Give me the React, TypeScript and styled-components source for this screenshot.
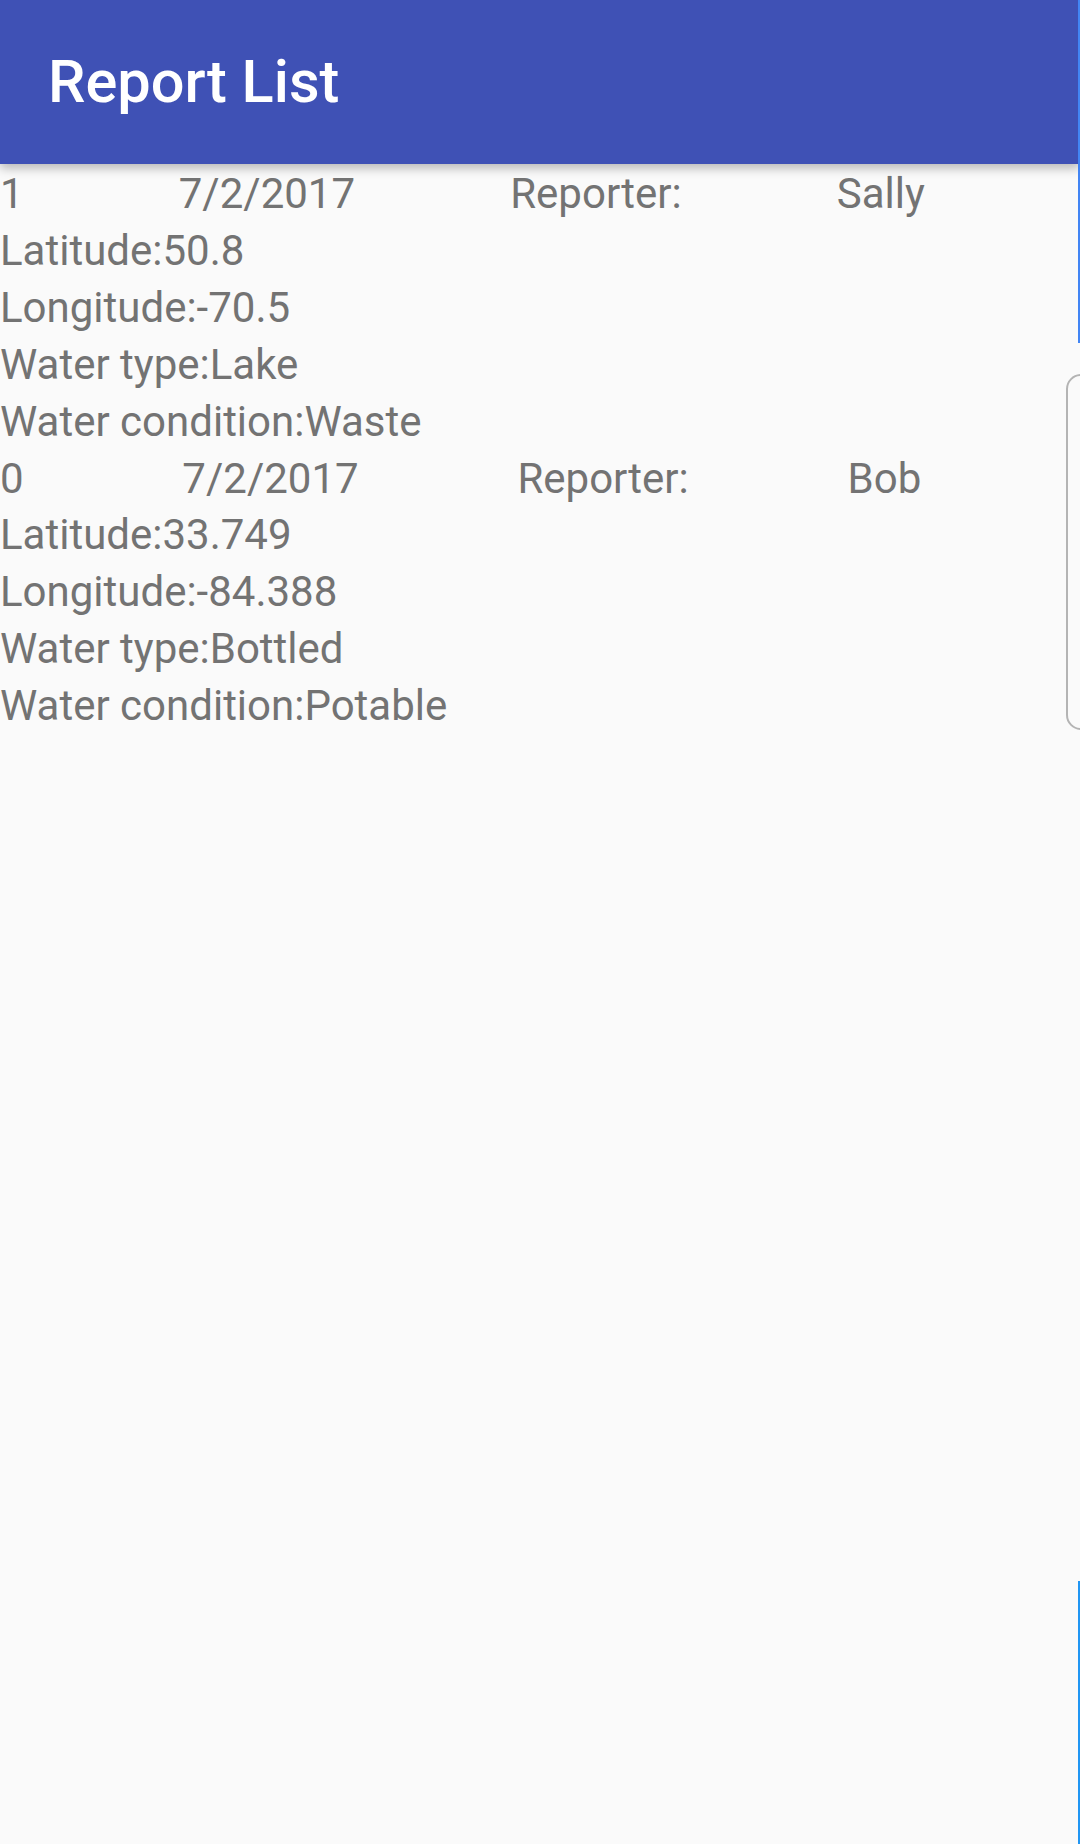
import React from "react";
import styled, { createGlobalStyle } from "styled-components";

interface Report {
  id: number;
  date: string;
  reporter: string;
  latitude: string;
  longitude: string;
  waterType: string;
  waterCondition: string;
}

const reports: Report[] = [
  {
    id: 1,
    date: "7/2/2017",
    reporter: "Sally",
    latitude: "50.8",
    longitude: "-70.5",
    waterType: "Lake",
    waterCondition: "Waste",
  },
  {
    id: 0,
    date: "7/2/2017",
    reporter: "Bob",
    latitude: "33.749",
    longitude: "-84.388",
    waterType: "Bottled",
    waterCondition: "Potable",
  },
];

const GlobalStyle = createGlobalStyle`
  html, body {
    margin: 0;
    padding: 0;
    background: #fafafa;
  }
  body {
    font-family: Roboto, "Noto Sans", sans-serif;
  }
`;

const Screen = styled.div`
  position: relative;
  width: 1080px;
  height: 1844px;
  overflow: hidden;
  background: #fafafa;
`;

const Toolbar = styled.header`
  position: relative;
  z-index: 1;
  display: flex;
  align-items: center;
  height: 164px;
  padding-left: 48px;
  box-sizing: border-box;
  background: #3f51b5;
  box-shadow: 0 4px 10px rgba(0, 0, 0, 0.28);
`;

const Title = styled.h1`
  margin: 0;
  color: #ffffff;
  font-size: 59.5px;
  font-weight: 500;
`;

const List = styled.div`
  display: flex;
  flex-direction: column;
  padding-top: 2px;
`;

const Line = styled.div`
  display: flex;
  color: #737373;
  font-size: 42px;
  line-height: 56.9px;
  white-space: nowrap;
`;

const Cell = styled.span`
  flex: 1 1 auto;
`;

const EdgeStrip = styled.div<{ $top: number; $height: number; $color: string }>`
  position: absolute;
  right: 0;
  top: ${({ $top }) => $top}px;
  width: 2px;
  height: ${({ $height }) => $height}px;
  background: ${({ $color }) => $color};
  z-index: 2;
`;

const EdgeHandle = styled.div`
  position: absolute;
  right: -16px;
  top: 374px;
  width: 30px;
  height: 356px;
  border: 2px solid #b4b4b4;
  border-radius: 16px;
  box-sizing: border-box;
`;

function ReportItem({ report }: { report: Report }) {
  return (
    <>
      <Line>
        <Cell>{report.id}</Cell>
        <Cell>{report.date}</Cell>
        <Cell>Reporter:</Cell>
        <Cell>{report.reporter}</Cell>
      </Line>
      <Line>Latitude:{report.latitude}</Line>
      <Line>Longitude:{report.longitude}</Line>
      <Line>Water type:{report.waterType}</Line>
      <Line>Water condition:{report.waterCondition}</Line>
    </>
  );
}

export default function App() {
  return (
    <Screen>
      <GlobalStyle />
      <Toolbar>
        <Title>Report List</Title>
      </Toolbar>
      <List>
        {reports.map((r) => (
          <ReportItem key={r.id} report={r} />
        ))}
      </List>
      <EdgeStrip $top={0} $height={343} $color="#4285f4" />
      <EdgeStrip $top={1581} $height={263} $color="#2196f3" />
      <EdgeHandle />
    </Screen>
  );
}
